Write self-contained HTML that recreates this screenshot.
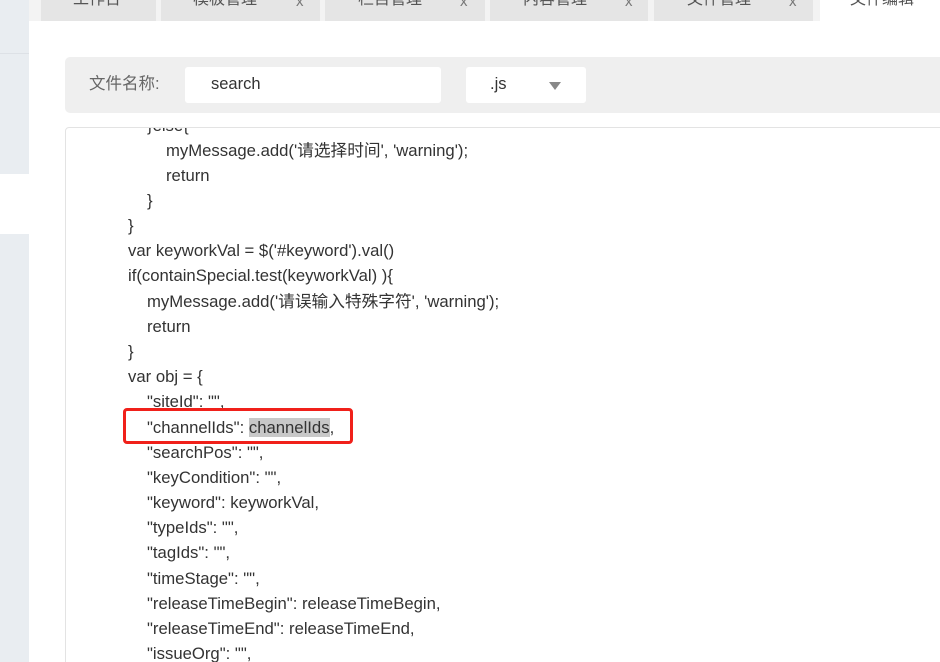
<!DOCTYPE html>
<html><head><meta charset="utf-8"><style>
*{margin:0;padding:0;box-sizing:border-box}
html,body{width:940px;height:662px;overflow:hidden}
body{background:#fff;position:relative;font-family:"Liberation Sans","Noto Sans CJK SC",sans-serif}
.side{position:absolute;left:0;top:0;width:29px;height:662px;background:#e9edf1}
.side .l{position:absolute;left:0;top:53px;width:29px;height:1px;background:#dde1e6}
.side .w{position:absolute;left:0;top:174px;width:29px;height:60px;background:#fff}
.tabbar{position:absolute;left:29px;top:0;width:911px;height:21px;background:#f3f3f3}
.tab{position:absolute;top:0;height:21px;background:#e5e5e5;color:#555;font-size:16px;line-height:16px;overflow:hidden}
.tab span{position:absolute;top:-8px}
.tab i{position:absolute;top:-6px;font-style:normal;font-size:15px;color:#777}
.act{background:#fff}
.filter{position:absolute;left:65px;top:57px;width:880px;height:56px;background:#efefef;border-radius:5px}
.lab{position:absolute;left:89px;top:75px;font-size:16.5px;color:#666;line-height:18px}
.inp{position:absolute;left:185px;top:67px;width:256px;height:36px;background:#fff;border-radius:3px;font-size:16.5px;color:#333;padding:8px 0 0 26px}
.sel{position:absolute;left:466px;top:67px;width:120px;height:36px;background:#fff;border-radius:3px;font-size:16.5px;color:#333;padding:8px 0 0 24px}
.tri{position:absolute;left:549px;top:82px;width:0;height:0;border-left:6px solid transparent;border-right:6px solid transparent;border-top:8px solid #888}
.code{position:absolute;left:65px;top:127px;width:890px;height:560px;border:1px solid #e3e3e3;border-radius:4px;overflow:hidden}
.clip{position:absolute;left:0;top:128px;width:940px;height:534px;overflow:hidden}
.ln{position:absolute;font-size:16.7px;color:#333;white-space:pre;line-height:20px}
.hl{background:#c8c8c8}
.red{position:absolute;left:123px;top:408px;width:230px;height:36px;border:3px solid #f0201a;border-radius:4px}
</style></head><body>
<div class="side"><div class="l"></div><div class="w"></div></div>
<div class="tabbar"></div>
<div class="tab" style="left:41px;width:115px"><span style="left:32px">工作台</span></div>
<div class="tab" style="left:161px;width:159px"><span style="left:32px">模板管理</span><i style="left:135px">x</i></div>
<div class="tab" style="left:325px;width:160px"><span style="left:33px">栏目管理</span><i style="left:135px">x</i></div>
<div class="tab" style="left:490px;width:158px"><span style="left:33px">内容管理</span><i style="left:135px">x</i></div>
<div class="tab" style="left:654px;width:159px"><span style="left:33px">文件管理</span><i style="left:135px">x</i></div>
<div class="tab act" style="left:820px;width:120px"><span style="left:30px">文件编辑</span></div>
<div class="filter"></div>
<div class="lab">文件名称:</div>
<div class="inp">search</div>
<div class="sel">.js</div>
<div class="tri"></div>
<div class="code"></div>
<div class="clip">
<div class="ln" style="left:147px;top:-12px">}else{</div>
<div class="ln" style="left:166px;top:13px">myMessage.add('请选择时间', 'warning');</div>
<div class="ln" style="left:166px;top:38px">return</div>
<div class="ln" style="left:147px;top:63px">}</div>
<div class="ln" style="left:128px;top:88px">}</div>
<div class="ln" style="left:128px;top:113px">var keyworkVal = $('#keyword').val()</div>
<div class="ln" style="left:128px;top:138px">if(containSpecial.test(keyworkVal) ){</div>
<div class="ln" style="left:147px;top:164px">myMessage.add('请误输入特殊字符', 'warning');</div>
<div class="ln" style="left:147px;top:189px">return</div>
<div class="ln" style="left:128px;top:214px">}</div>
<div class="ln" style="left:128px;top:239px">var obj = {</div>
<div class="ln" style="left:147px;top:264px">"siteId": "",</div>
<div class="ln" style="left:147px;top:290px">"channelIds": <span class="hl">channelIds</span>,</div>
<div class="ln" style="left:147px;top:315px">"searchPos": "",</div>
<div class="ln" style="left:147px;top:340px">"keyCondition": "",</div>
<div class="ln" style="left:147px;top:365px">"keyword": keyworkVal,</div>
<div class="ln" style="left:147px;top:390px">"typeIds": "",</div>
<div class="ln" style="left:147px;top:415px">"tagIds": "",</div>
<div class="ln" style="left:147px;top:441px">"timeStage": "",</div>
<div class="ln" style="left:147px;top:466px">"releaseTimeBegin": releaseTimeBegin,</div>
<div class="ln" style="left:147px;top:491px">"releaseTimeEnd": releaseTimeEnd,</div>
<div class="ln" style="left:147px;top:516px">"issueOrg": "",</div>
</div>
<div class="red"></div>
</body></html>
